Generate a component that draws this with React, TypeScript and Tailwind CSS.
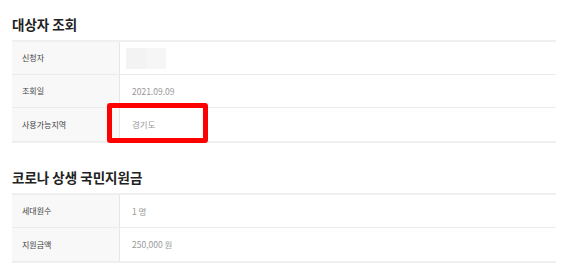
const kr = { fontFamily: '"Noto Sans CJK KR", "Noto Sans", sans-serif' };

type Row = { label: string; value?: string; masked?: boolean };

function InfoTable({ rows }: { rows: Row[] }) {
  return (
    <div className="border-t-2 border-b-2 border-[#efefef]">
      {rows.map((r, i) => (
        <div
          key={r.label}
          className={`flex h-[33px] ${i < rows.length - 1 ? "border-b border-[#ebebeb]" : ""}`}
        >
          <div className="w-[108px] shrink-0 bg-[#f8f8f8] border-r border-[#e6e6e6] pl-[10px] flex items-center text-[8px] text-[#444]">
            {r.label}
          </div>
          <div className="flex-1 pl-[12px] flex items-center text-[8.5px] text-[#999]">
            {r.masked ? (
              <div className="flex h-[21px] -ml-[6px]">
                <div className="w-[20px] bg-[#f3f3f3]" />
                <div className="w-[20px] bg-[#f6f6f6]" />
              </div>
            ) : (
              r.value
            )}
          </div>
        </div>
      ))}
    </div>
  );
}

export default function App() {
  return (
    <div className="relative w-[570px] h-[269px] bg-white overflow-hidden" style={kr}>
      <div className="pl-3 w-[556px]">
        <h2 className="pt-[13px] mb-[5px] text-[13.5px] leading-[22px] font-bold text-[#222]">
          대상자 조회
        </h2>
        <InfoTable
          rows={[
            { label: "신청자", masked: true },
            { label: "조회일", value: "2021.09.09" },
            { label: "사용가능지역", value: "경기도" },
          ]}
        />

        <h2 className="mt-[23px] mb-[5px] text-[13.5px] leading-[22px] font-bold text-[#222]">
          코로나 상생 국민지원금
        </h2>
        <InfoTable
          rows={[
            { label: "세대원수", value: "1 명" },
            { label: "지원금액", value: "250,000 원" },
          ]}
        />
      </div>

      {/* highlight around the region value */}
      <div className="absolute left-[107px] top-[103px] w-[101px] h-[40px] border-[5px] border-[#ff0000] rounded-[3px]" />
    </div>
  );
}
